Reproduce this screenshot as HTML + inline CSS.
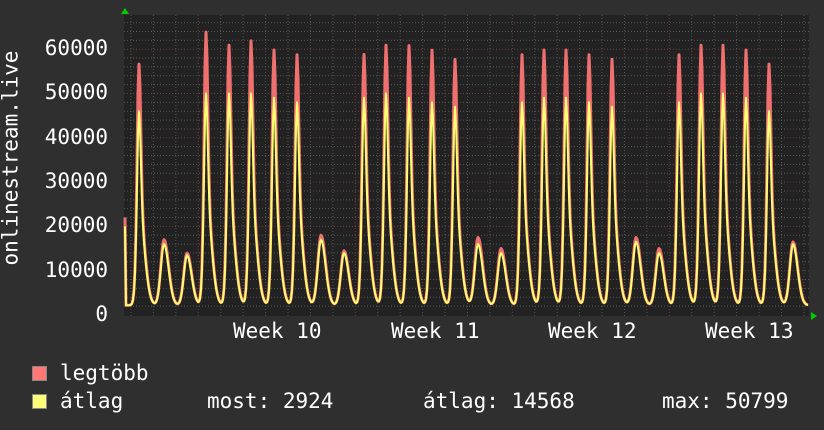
<!DOCTYPE html>
<html><head><meta charset="utf-8"><style>
html,body{margin:0;padding:0;background:#2f2f2f;}
body{width:824px;height:430px;overflow:hidden;position:relative;font-family:"DejaVu Sans Mono","Liberation Mono",monospace;color:#fff;}
.t{position:absolute;font-size:21px;line-height:21px;white-space:pre;}
.yl{right:716px;text-align:right;}
</style></head><body>
<svg id="g" width="824" height="430" style="position:absolute;left:0;top:0">
<rect x="124" y="15" width="685" height="301" fill="#222"/>
<g id="grid"></g>
<path id="mx" fill="none" stroke="#f07070" stroke-width="3" stroke-linejoin="round"/>
<path id="av" fill="none" stroke="#ffff70" stroke-width="2" stroke-linejoin="round"/>
<polygon points="121,14 125,8 129,14" fill="#0c0"/>
<polygon points="811,312 817,316 811,320" fill="#0c0"/>
</svg>
<div class="t yl" style="top:38px">60000</div>
<div class="t yl" style="top:82px">50000</div>
<div class="t yl" style="top:127px">40000</div>
<div class="t yl" style="top:171px">30000</div>
<div class="t yl" style="top:215px">20000</div>
<div class="t yl" style="top:260px">10000</div>
<div class="t yl" style="top:304px">0</div>
<div class="t" style="left:-89px;top:155px;transform:rotate(-90deg);transform-origin:center;width:200px;text-align:center;">onlinestream.live</div>
<div class="t" style="left:233px;top:321px">Week 10</div>
<div class="t" style="left:391px;top:321px">Week 11</div>
<div class="t" style="left:548px;top:321px">Week 12</div>
<div class="t" style="left:705px;top:321px">Week 13</div>
<div style="position:absolute;left:32px;top:366px;width:13px;height:13px;background:#f77;border:1px solid #888"></div>
<div style="position:absolute;left:32px;top:394px;width:13px;height:13px;background:#ff7;border:1px solid #888"></div>
<div class="t" style="left:60px;top:363px">legtöbb</div>
<div class="t" style="left:60px;top:391px">átlag</div>
<div class="t" style="left:207px;top:391px">most: 2924</div>
<div class="t" style="left:423px;top:391px">átlag: 14568</div>
<div class="t" style="left:662px;top:391px">max: 50799</div>
<script>
var g=document.getElementById('grid'),s='';
var Y=function(v){return 315-v*44.3/10000;};
for(var v=2000;v<=66000;v+=2000){var y=Y(v);if(y<15)break;var maj=v%10000==0;
s+='<line x1="124" x2="809" y1="'+y+'" y2="'+y+'" stroke="'+(maj?'#6a4040':'#555')+'" stroke-dasharray="1,2"/>';}
for(var x=131;x<809;x+=22.43){var d=Math.round((x-199)/22.43);var maj=(d%7==0);
s+='<line y1="15" y2="316" x1="'+x+'" x2="'+x+'" stroke="'+(maj?'#6a4040':'#555')+'" stroke-dasharray="1,2"/>';}
g.innerHTML=s;
var P=[[139,54,46],[164,17,16],[187,14,13.5],[206,61,50],[229,58,50],[251,59,50],[274,57,49],[297,56,48],[321,18,17],[344,14.5,14],[364,56,49],[386,58,50],[409,58,49],[432,57,48],[455,55,47],[478,17.5,16],[501,15,14],[522,56,48],[544,57,49],[566,57,49],[589,56,48],[612,55,47],[636,17.5,16.5],[659,15,14],[679,56,48],[701,58,50],[723,58,50],[746,57,49],[769,54,46],[793,16.5,16]];
function val(x,mx){var v=2200;for(var i=0;i<P.length;i++){var p=P[i],d=x-p[0],big=p[1]>30;
var wl=big?3.5:4.5,wr=big?7.5:6.5;var w=d<0?wl:wr;var gw=Math.exp(-d*d/(w*w));
var A=p[2]*1000-2200;
if(big){var gn=Math.exp(-d*d/6);var a=A*0.5*gw+A*0.5*gn;
if(mx)a+=(p[1]-p[2])*1000*gn+a*0.06;v+=a;}else{var a=A*gw;if(mx)a+=(p[1]-p[2])*1000*gw;v+=a;}}
return v;}
function path(mx){var d='';for(var x=125;x<=808;x++){var v=val(x,mx);if(x==125)v=mx?22000:20000;d+=(x==125?'M':'L')+x+','+Y(v).toFixed(1);}return d;}
document.getElementById('mx').setAttribute('d',path(true));
document.getElementById('av').setAttribute('d',path(false));
</script>
</body></html>
